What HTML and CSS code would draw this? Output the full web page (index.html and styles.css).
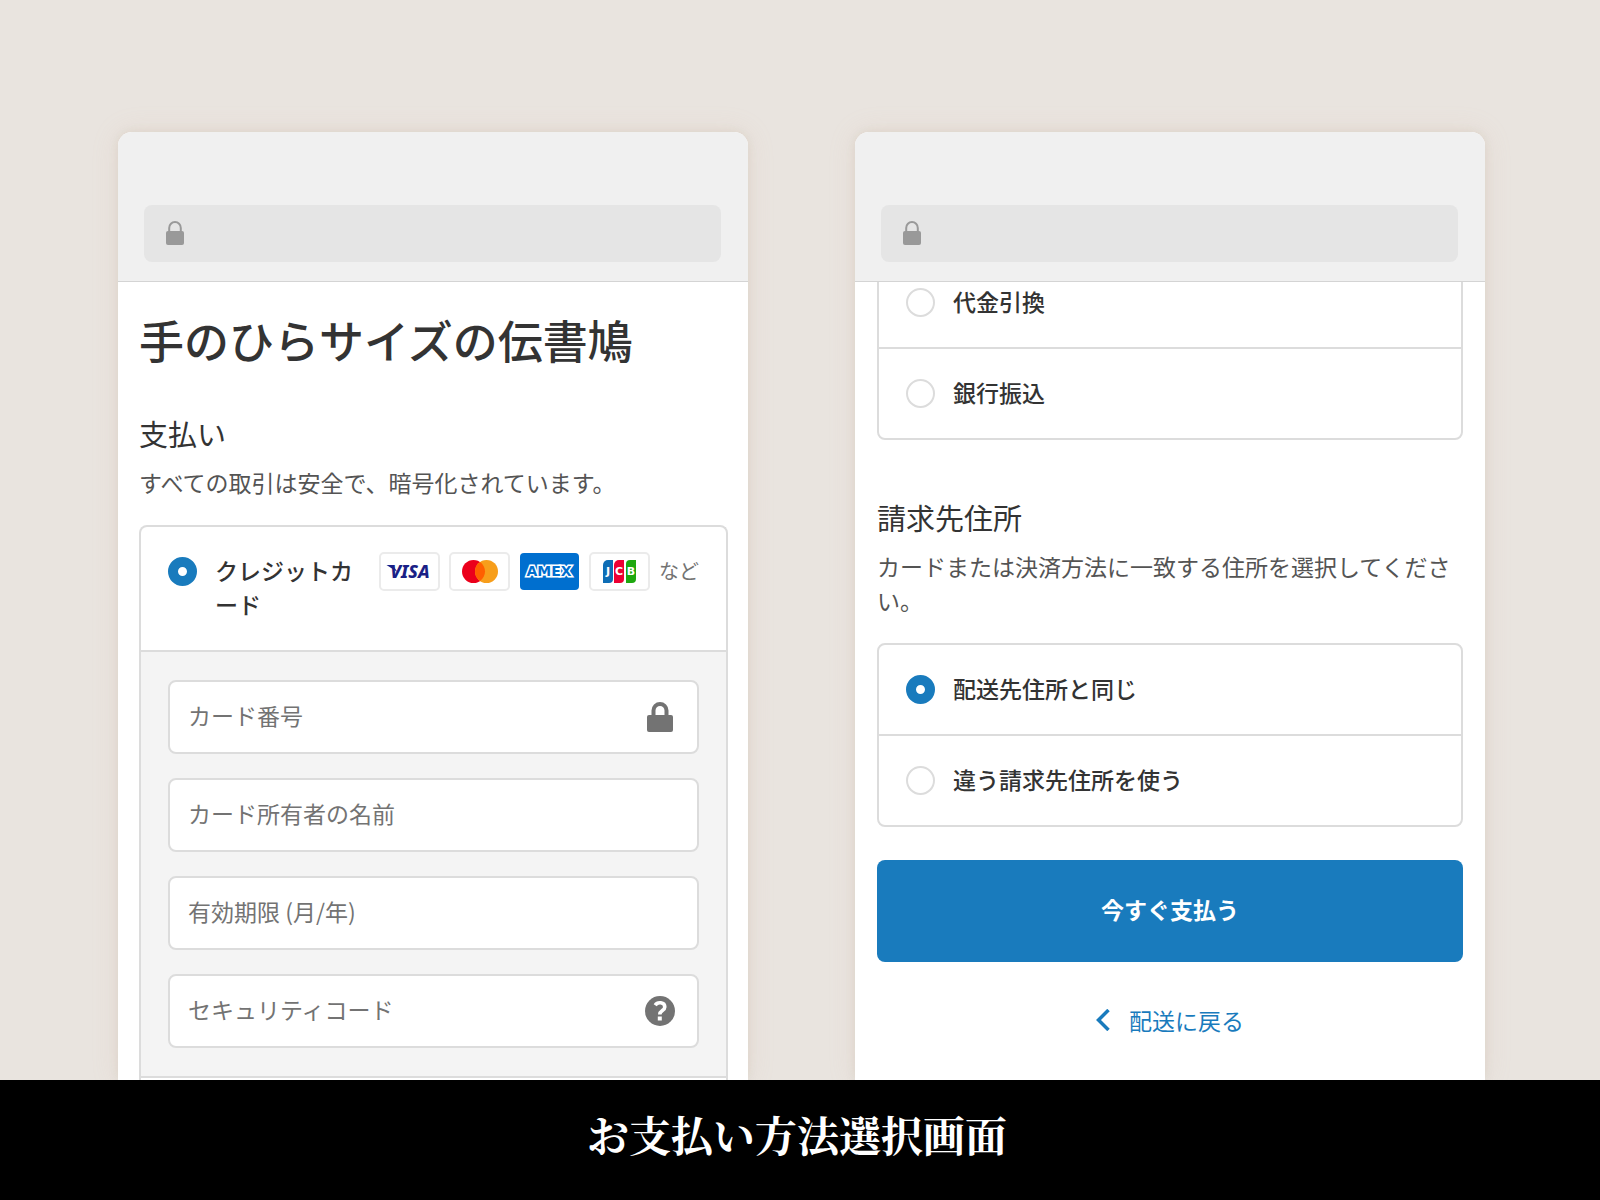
FILE: index.html
```html
<!DOCTYPE html>
<html lang="ja">
<head>
<meta charset="utf-8">
<meta name="viewport" content="width=device-width, initial-scale=1">
<title>お支払い方法選択画面</title>
<link rel="stylesheet" href="styles.css">
</head>
<body>
<main class="stage">
  <section class="phone">
    <header class="browser">
      <div class="urlbar">
        <svg class="url-lock" viewBox="0 0 18 24" aria-hidden="true"><path d="M3.2 11V7a5.8 6 0 0 1 11.6 0v4" fill="none" stroke="#999" stroke-width="2"/><rect y="10" width="18" height="14" rx="2" fill="#999"/></svg>
      </div>
    </header>
    <form class="screen">
      <h1 class="title">手のひらサイズの伝書鳩</h1>
      <h2 class="heading">支払い</h2>
      <p class="note">すべての取引は安全で、暗号化されています。</p>
      <div class="group group-open">
        <div class="option">
          <input class="radio" type="radio" name="method" id="card" checked>
          <label class="option-label" for="card">クレジットカード</label>
          <div class="brands">
            <svg class="brand" viewBox="0 0 61 39" role="img" aria-label="Visa"><rect x="1" y="1" width="59" height="37" rx="4" fill="#fff" stroke="#ebebeb" stroke-width="2"/><path d="M7.500 13h6l5 7z" fill="#1a1f86"/><text class="visa" x="31" y="26">VISA</text></svg>
            <svg class="brand" viewBox="0 0 61 39" role="img" aria-label="Mastercard"><rect x="1" y="1" width="59" height="37" rx="4" fill="#fff" stroke="#ebebeb" stroke-width="2"/><circle cx="24.500" cy="19.500" r="11.500" fill="#eb001b"/><circle cx="37.500" cy="19.500" r="11.500" fill="#f79e1b"/><path d="M31 10a11.500 11.500 0 0 1 0 19a11.500 11.500 0 0 1 0-19z" fill="#ff5f00"/></svg>
            <svg class="brand" viewBox="0 0 61 39" role="img" aria-label="American Express"><rect x="1" y="1" width="59" height="37" rx="4" fill="#006fcf"/><text class="amex" x="30" y="24">AMEX</text></svg>
            <svg class="brand" viewBox="0 0 61 39" role="img" aria-label="JCB"><rect x="1" y="1" width="59" height="37" rx="4" fill="#fff" stroke="#ebebeb" stroke-width="2"/><path d="M19 8h5v19a4 4 0 0 1-4 4h-6V13a5 5 0 0 1 5-5z" fill="#0e6db5"/><path d="M30 8h5v19a4 4 0 0 1-4 4h-6V13a5 5 0 0 1 5-5z" fill="#ed0033"/><path d="M41 8h6v19a4 4 0 0 1-4 4h-6V12a4 4 0 0 1 4-4z" fill="#1ea80f"/><text class="jcb" x="19" y="23">J</text><text class="jcb" x="30" y="23">C</text><text class="jcb" x="42" y="23">B</text></svg>
            <span class="etc">など</span>
          </div>
        </div>
        <div class="panel">
          <div class="field">
            <input class="input" type="text" placeholder="カード番号" aria-label="カード番号">
            <svg class="field-icon" viewBox="0 0 30 30" aria-hidden="true"><path d="M8.500 14V8.500a6.500 6.500 0 0 1 13 0V14" fill="none" stroke="#737373" stroke-width="4"/><rect x="2" y="13" width="26" height="17" rx="2" fill="#737373"/></svg>
          </div>
          <div class="field">
            <input class="input" type="text" placeholder="カード所有者の名前" aria-label="カード所有者の名前">
          </div>
          <div class="field">
            <input class="input" type="text" placeholder="有効期限 (月/年)" aria-label="有効期限 (月/年)">
          </div>
          <div class="field">
            <input class="input" type="text" placeholder="セキュリティコード" aria-label="セキュリティコード">
            <svg class="field-icon" viewBox="0 0 30 30" aria-hidden="true"><circle cx="15" cy="15" r="15" fill="#737373"/><path d="M10.200 9.200C12.500 5.500 19.800 6 19.800 11c0 3.800-5 3.300-5 7.500" fill="none" stroke="#fff" stroke-width="3.600"/><rect x="12.800" y="20.500" width="4" height="4" fill="#fff"/></svg>
          </div>
        </div>
      </div>
    </form>
  </section>

  <section class="phone">
    <header class="browser">
      <div class="urlbar">
        <svg class="url-lock" viewBox="0 0 18 24" aria-hidden="true"><path d="M3.200 11V7a5.800 6 0 0 1 11.600 0v4" fill="none" stroke="#999" stroke-width="2"/><rect y="10" width="18" height="14" rx="2" fill="#999"/></svg>
      </div>
    </header>
    <form class="screen screen-scrolled">
      <div class="group">
        <div class="option">
          <input class="radio" type="radio" name="other" id="cod">
          <label class="option-label" for="cod">代金引換</label>
        </div>
        <div class="option">
          <input class="radio" type="radio" name="other" id="bank">
          <label class="option-label" for="bank">銀行振込</label>
        </div>
      </div>
      <h2 class="heading heading-next">請求先住所</h2>
      <p class="note">カードまたは決済方法に一致する住所を選択してください。</p>
      <div class="group">
        <div class="option">
          <input class="radio" type="radio" name="address" id="same" checked>
          <label class="option-label" for="same">配送先住所と同じ</label>
        </div>
        <div class="option">
          <input class="radio" type="radio" name="address" id="different">
          <label class="option-label" for="different">違う請求先住所を使う</label>
        </div>
      </div>
      <button class="pay" type="button">今すぐ支払う</button>
      <a class="back" href="#"><svg class="chevron" viewBox="0 0 14 22" aria-hidden="true"><path d="M12.500 1L2.500 11l10 10" fill="none" stroke="#197bbd" stroke-width="3.500"/></svg>配送に戻る</a>
    </form>
  </section>
</main>
<footer class="caption">お支払い方法選択画面</footer>
</body>
</html>
```

FILE: styles.css
```css
* {
  box-sizing: border-box;
}

body {
  margin: 0;
  height: 100vh;
  display: flex;
  flex-direction: column;
  background: #e9e4df;
  color: #333;
  font-family: "Noto Sans CJK JP", sans-serif;
  font-size: 23px;
  line-height: 34px;
}

h1, h2, p {
  margin: 0;
}

.stage {
  flex: 1;
  min-height: 0;
  display: grid;
  grid-template-columns: 1fr 1fr;
  gap: 107px;
  padding: 132px 115px 0 118px;
  overflow: hidden;
}

.phone {
  min-height: 0;
  display: flex;
  flex-direction: column;
  background: #fff;
  border-radius: 14px 14px 0 0;
  box-shadow: 0 0 10px rgba(150, 140, 110, 0.16), 0 0 28px rgba(225, 180, 155, 0.16);
}

.browser {
  flex: none;
  padding: 73px 27px 19px 26px;
  background: #f0f0f0;
  border-bottom: 1px solid #d4d4d4;
  border-radius: 14px 14px 0 0;
}

.urlbar {
  display: flex;
  align-items: center;
  height: 57px;
  padding: 0 22px 2px;
  background: #e5e5e5;
  border-radius: 8px;
}

.url-lock {
  width: 18px;
  height: 24px;
}

.screen {
  flex: 1;
  min-height: 0;
  display: flex;
  flex-direction: column;
  padding: 28px 20px 0 21px;
  overflow: hidden;
}

.screen-scrolled {
  justify-content: flex-end;
  padding: 0 22px 43px;
}

.title {
  font-size: 45px;
  line-height: 60px;
  font-weight: 500;
}

.heading {
  margin-top: 43px;
  font-size: 29px;
  line-height: 40px;
  font-weight: 400;
}

.heading-next {
  margin-top: 57px;
}

.note {
  margin: 12px 0 26px;
  color: #545454;
}

.group {
  flex: none;
  border: 2px solid #dcdcdc;
  border-radius: 8px;
}

.group-open {
  flex: 1;
  border-bottom: 0;
  border-radius: 8px 8px 0 0;
}

.option {
  display: flex;
  align-items: flex-start;
  gap: 18px;
  padding: 26px 27px 29px;
}

.option + .option {
  border-top: 2px solid #dcdcdc;
}

.radio {
  appearance: none;
  flex: none;
  width: 29px;
  height: 29px;
  margin: 4px 0 0;
  border: 2px solid #dcdcdc;
  border-radius: 50%;
  background: #fff;
}

.radio:checked {
  border: 10px solid #197bbd;
}

.option-label {
  flex: 1;
  font-weight: 500;
}

.brands {
  display: flex;
  align-items: center;
  gap: 9px;
  height: 36px;
}

.brand {
  width: 61px;
  height: 39px;
}

.visa {
  fill: #1a1f86;
  font: italic 800 18px "Noto Sans", sans-serif;
  text-anchor: middle;
}

.amex {
  fill: #006fcf;
  stroke: #fff;
  stroke-width: 3px;
  paint-order: stroke;
  font: 700 14px "DejaVu Sans", sans-serif;
  text-anchor: middle;
}

.jcb {
  fill: #fff;
  font: 700 11px "DejaVu Sans", sans-serif;
  text-anchor: middle;
}

.etc {
  color: #737373;
  font-size: 20px;
}

.panel {
  display: grid;
  gap: 24px;
  padding: 28px 27px;
  background: #f4f4f4;
  border-top: 2px solid #dcdcdc;
  border-bottom: 2px solid #dcdcdc;
}

.field {
  display: flex;
  align-items: center;
  height: 74px;
  padding: 0 22px 0 18px;
  background: #fff;
  border: 2px solid #dcdcdc;
  border-radius: 8px;
}

.input {
  flex: 1;
  min-width: 0;
  height: 38px;
  padding: 0 0 4px;
  border: 0;
  outline: 0;
  background: none;
  color: #333;
  font: inherit;
}

.input::placeholder {
  color: #737373;
  opacity: 1;
}

.field-icon {
  flex: none;
  width: 30px;
  height: 30px;
}

.pay {
  flex: none;
  height: 102px;
  margin-top: 33px;
  padding: 0 0 4px;
  border: 0;
  border-radius: 8px;
  background: #197bbd;
  color: #fff;
  font: inherit;
  font-weight: 700;
}

.back {
  display: flex;
  align-items: center;
  align-self: center;
  gap: 19px;
  margin-top: 41px;
  color: #197bbd;
  text-decoration: none;
}

.chevron {
  width: 14px;
  height: 22px;
}

.caption {
  flex: none;
  padding: 24px 6px 36px 0;
  background: #000;
  color: #fff;
  font-family: "Noto Serif CJK JP", "Noto Serif JP", serif;
  font-size: 42px;
  font-weight: 700;
  line-height: 60px;
  text-align: center;
}
```
